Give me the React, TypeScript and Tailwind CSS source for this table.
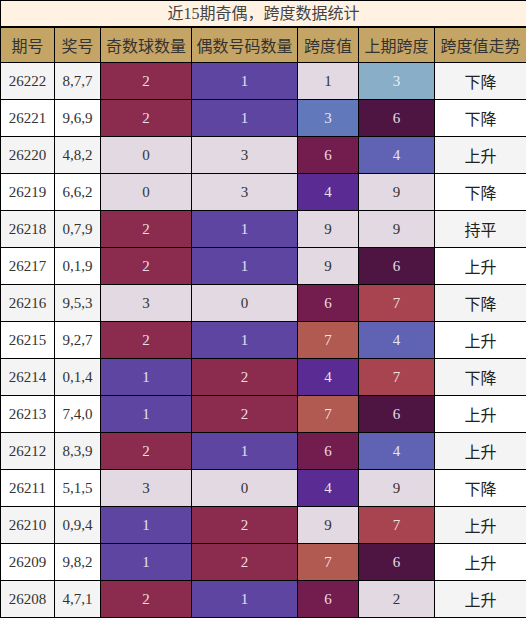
import React from 'react'

type Row = {
  qh: string
  jh: string
  odd: number
  even: number
  kd: number
  prev: number
  trend: string
}

const rows: Row[] = [
  { qh: '26222', jh: '8,7,7', odd: 2, even: 1, kd: 1, prev: 3, trend: '下降' },
  { qh: '26221', jh: '9,6,9', odd: 2, even: 1, kd: 3, prev: 6, trend: '下降' },
  { qh: '26220', jh: '4,8,2', odd: 0, even: 3, kd: 6, prev: 4, trend: '上升' },
  { qh: '26219', jh: '6,6,2', odd: 0, even: 3, kd: 4, prev: 9, trend: '下降' },
  { qh: '26218', jh: '0,7,9', odd: 2, even: 1, kd: 9, prev: 9, trend: '持平' },
  { qh: '26217', jh: '0,1,9', odd: 2, even: 1, kd: 9, prev: 6, trend: '上升' },
  { qh: '26216', jh: '9,5,3', odd: 3, even: 0, kd: 6, prev: 7, trend: '下降' },
  { qh: '26215', jh: '9,2,7', odd: 2, even: 1, kd: 7, prev: 4, trend: '上升' },
  { qh: '26214', jh: '0,1,4', odd: 1, even: 2, kd: 4, prev: 7, trend: '下降' },
  { qh: '26213', jh: '7,4,0', odd: 1, even: 2, kd: 7, prev: 6, trend: '上升' },
  { qh: '26212', jh: '8,3,9', odd: 2, even: 1, kd: 6, prev: 4, trend: '上升' },
  { qh: '26211', jh: '5,1,5', odd: 3, even: 0, kd: 4, prev: 9, trend: '下降' },
  { qh: '26210', jh: '0,9,4', odd: 1, even: 2, kd: 9, prev: 7, trend: '上升' },
  { qh: '26209', jh: '9,8,2', odd: 1, even: 2, kd: 7, prev: 6, trend: '上升' },
  { qh: '26208', jh: '4,7,1', odd: 2, even: 1, kd: 6, prev: 2, trend: '上升' },
]

const light = 'bg-[#e2d9e2] text-[#333]'

// 奇偶数量的颜色
const countCls: Record<number, string> = {
  0: light,
  1: 'bg-[#5e45a2] text-[#e6e0ee]',
  2: 'bg-[#8b2c4e] text-[#ecdfe4]',
  3: light,
}

// 跨度值颜色
const kdCls: Record<number, string> = {
  1: light,
  2: light,
  3: 'bg-[#6179bb] text-[#e4e6f2]',
  4: 'bg-[#5a2b92] text-[#e8e2f0]',
  6: 'bg-[#731d4e] text-[#ecdce4]',
  7: 'bg-[#b15a52] text-[#f2e2e0]',
  9: light,
}

// 上期跨度颜色
const prevCls: Record<number, string> = {
  2: light,
  3: 'bg-[#88aec8] text-[#e8f0f6]',
  4: 'bg-[#6062b4] text-[#e6e6f4]',
  6: 'bg-[#4e1543] text-[#eadce6]',
  7: 'bg-[#a8444f] text-[#f2e0e2]',
  9: light,
}

const serif = "font-['Liberation_Serif','Noto_Sans_CJK_SC',serif]"
const sans = "font-['Noto_Sans_CJK_SC','Noto_Sans',sans-serif]"

export default function App() {
  return (
    <div className="w-[526px] bg-white">
      <table className="w-[526px] table-fixed border-collapse border border-black text-center">
        <colgroup>
          <col className="w-[54px]" />
          <col className="w-[46px]" />
          <col className="w-[91px]" />
          <col className="w-[106px]" />
          <col className="w-[61px]" />
          <col className="w-[76px]" />
          <col className="w-[92px]" />
        </colgroup>
        <thead>
          <tr>
            <td
              colSpan={7}
              className={`h-[26px] border-b-2 border-black bg-[#fff2e2] p-0 text-[16px] leading-none text-[#444] ${sans}`}
            >
              近<span className={serif}>15</span>期奇偶，跨度数据统计
            </td>
          </tr>
          <tr className={`bg-[#c4a566] text-[16px] leading-none text-[#333] ${sans}`}>
            {['期号', '奖号', '奇数球数量', '偶数号码数量', '跨度值', '上期跨度', '跨度值走势'].map((h) => (
              <th key={h} className="h-[36px] border border-black p-0 font-normal">
                {h}
              </th>
            ))}
          </tr>
        </thead>
        <tbody className={`${serif} text-[15px] leading-none`}>
          {rows.map((r, i) => {
            const stripe = i % 2 === 0 ? 'bg-[#f4f4f4]' : 'bg-white'
            return (
              <tr key={r.qh}>
                <td className={`h-[37px] border border-black p-0 text-[#333] ${stripe}`}>{r.qh}</td>
                <td className={`border border-black p-0 text-[#333] ${stripe}`}>{r.jh}</td>
                <td className={`border border-black p-0 ${countCls[r.odd]}`}>{r.odd}</td>
                <td className={`border border-black p-0 ${countCls[r.even]}`}>{r.even}</td>
                <td className={`border border-black p-0 ${kdCls[r.kd]}`}>{r.kd}</td>
                <td className={`border border-black p-0 ${prevCls[r.prev]}`}>{r.prev}</td>
                <td className={`border border-black p-0 text-[16px] leading-none text-[#222] ${sans} ${stripe}`}>
                  {r.trend}
                </td>
              </tr>
            )
          })}
        </tbody>
      </table>
    </div>
  )
}
